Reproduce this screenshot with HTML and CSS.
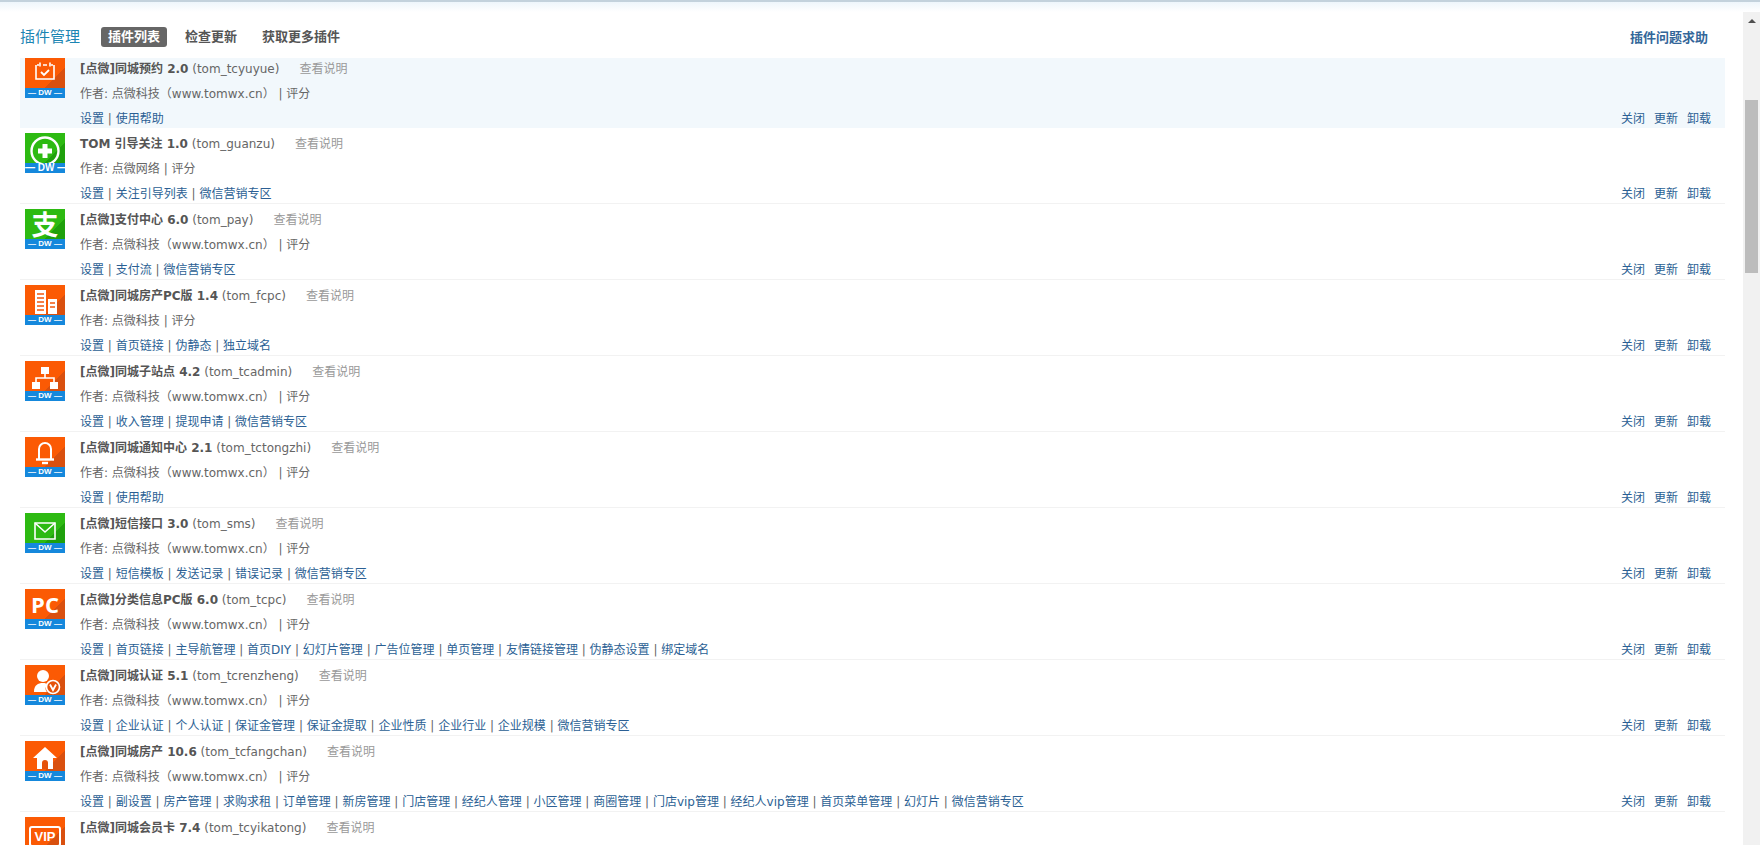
FILE: index.html
```html
<!doctype html>
<html>

	<head>
		<meta charset="utf-8">
		<title>插件管理</title>
		<link rel="stylesheet" href="styles.css">
	</head>

	<body>
		<div class="topline"></div>
		<div class="frame">
			<div class="main">
				<!-- 顶部导航 -->
				<div class="head">
					<h3 class="head-title">插件管理</h3>
					<a class="tab active">插件列表</a>
					<a class="tab">检查更新</a>
					<a class="tab">获取更多插件</a>
					<a class="help">插件问题求助</a>
				</div>

				<!-- 插件列表 -->
				<div class="list">
					<div class="row hover">
						<div class="icon orange">
							<svg viewBox="0 0 40 30"><path d="M12 7h2M18 7h4M26 7h2M11 7v14h18V7" fill="none" stroke="#fff" stroke-width="1.6"/><path d="M15 4.5v4M25 4.5v4" stroke="#fff" stroke-width="1.6"/><path d="M16 14l3 3 5-5" fill="none" stroke="#fff" stroke-width="1.8"/></svg>
							<div class="band">— DW —</div>
						</div>
						<div class="info">
							<p class="name"><b>[点微]同城预约 2.0</b> (tom_tcyuyue)<a class="desc">查看说明</a></p>
							<p class="author">作者: 点微科技（www.tomwx.cn） | 评分</p>
							<div class="links">
								<p><a>设置</a> | <a>使用帮助</a></p>
								<p class="ops"><a>关闭</a><a>更新</a><a>卸载</a></p>
							</div>
						</div>
					</div>

					<div class="row">
						<div class="icon green">
							<svg viewBox="0 0 40 30"><circle cx="20" cy="18" r="13.5" fill="none" stroke="#fff" stroke-width="2.4"/><path d="M20 11v14M13 18h14" stroke="#fff" stroke-width="5"/></svg>
							<div class="band big">— DW —</div>
						</div>
						<div class="info">
							<p class="name"><b>TOM 引导关注 1.0</b> (tom_guanzu)<a class="desc">查看说明</a></p>
							<p class="author">作者: 点微网络 | 评分</p>
							<div class="links">
								<p><a>设置</a> | <a>关注引导列表</a> | <a>微信营销专区</a></p>
								<p class="ops"><a>关闭</a><a>更新</a><a>卸载</a></p>
							</div>
						</div>
					</div>

					<div class="row">
						<div class="icon green">
							<div class="glyph zhi">支</div>
							<div class="band">— DW —</div>
						</div>
						<div class="info">
							<p class="name"><b>[点微]支付中心 6.0</b> (tom_pay)<a class="desc">查看说明</a></p>
							<p class="author">作者: 点微科技（www.tomwx.cn） | 评分</p>
							<div class="links">
								<p><a>设置</a> | <a>支付流</a> | <a>微信营销专区</a></p>
								<p class="ops"><a>关闭</a><a>更新</a><a>卸载</a></p>
							</div>
						</div>
					</div>

					<div class="row">
						<div class="icon orange">
							<svg viewBox="0 0 40 30"><path d="M10 5h11v24H10zM23 14h9v15h-9z" fill="#fff"/><path d="M12 9h7M12 13h7M12 17h7M12 21h7M12 25h7M25 18h5M25 22h5" stroke="#f2570c" stroke-width="1.6"/></svg>
							<div class="band">— DW —</div>
						</div>
						<div class="info">
							<p class="name"><b>[点微]同城房产PC版 1.4</b> (tom_fcpc)<a class="desc">查看说明</a></p>
							<p class="author">作者: 点微科技 | 评分</p>
							<div class="links">
								<p><a>设置</a> | <a>首页链接</a> | <a>伪静态</a> | <a>独立域名</a></p>
								<p class="ops"><a>关闭</a><a>更新</a><a>卸载</a></p>
							</div>
						</div>
					</div>

					<div class="row">
						<div class="icon orange">
							<svg viewBox="0 0 40 30"><path d="M16 6h8v7h-8zM7 21h8v7H7zM25 21h8v7h-8z" fill="#fff"/><path d="M20 13v4M11 21v-4h18v4" fill="none" stroke="#fff" stroke-width="1.6"/></svg>
							<div class="band">— DW —</div>
						</div>
						<div class="info">
							<p class="name"><b>[点微]同城子站点 4.2</b> (tom_tcadmin)<a class="desc">查看说明</a></p>
							<p class="author">作者: 点微科技（www.tomwx.cn） | 评分</p>
							<div class="links">
								<p><a>设置</a> | <a>收入管理</a> | <a>提现申请</a> | <a>微信营销专区</a></p>
								<p class="ops"><a>关闭</a><a>更新</a><a>卸载</a></p>
							</div>
						</div>
					</div>

					<div class="row">
						<div class="icon orange">
							<svg viewBox="0 0 40 30"><path d="M14 22V12a6 6 0 0 1 12 0v10" fill="none" stroke="#fff" stroke-width="2"/><path d="M11 22.500h18" stroke="#fff" stroke-width="2.400"/><path d="M17 26h6" stroke="#fff" stroke-width="2.400"/></svg>
							<div class="band">— DW —</div>
						</div>
						<div class="info">
							<p class="name"><b>[点微]同城通知中心 2.1</b> (tom_tctongzhi)<a class="desc">查看说明</a></p>
							<p class="author">作者: 点微科技（www.tomwx.cn） | 评分</p>
							<div class="links">
								<p><a>设置</a> | <a>使用帮助</a></p>
								<p class="ops"><a>关闭</a><a>更新</a><a>卸载</a></p>
							</div>
						</div>
					</div>

					<div class="row">
						<div class="icon green">
							<svg viewBox="0 0 40 30"><path d="M10 10h20v16H10z" fill="none" stroke="#fff" stroke-width="1.600"/><path d="M10 10l10 9 10-9" fill="none" stroke="#fff" stroke-width="1.600"/></svg>
							<div class="band">— DW —</div>
						</div>
						<div class="info">
							<p class="name"><b>[点微]短信接口 3.0</b> (tom_sms)<a class="desc">查看说明</a></p>
							<p class="author">作者: 点微科技（www.tomwx.cn） | 评分</p>
							<div class="links">
								<p><a>设置</a> | <a>短信模板</a> | <a>发送记录</a> | <a>错误记录</a> | <a>微信营销专区</a></p>
								<p class="ops"><a>关闭</a><a>更新</a><a>卸载</a></p>
							</div>
						</div>
					</div>

					<div class="row">
						<div class="icon orange">
							<div class="glyph pc">PC</div>
							<div class="band">— DW —</div>
						</div>
						<div class="info">
							<p class="name"><b>[点微]分类信息PC版 6.0</b> (tom_tcpc)<a class="desc">查看说明</a></p>
							<p class="author">作者: 点微科技（www.tomwx.cn） | 评分</p>
							<div class="links">
								<p><a>设置</a> | <a>首页链接</a> | <a>主导航管理</a> | <a>首页DIY</a> | <a>幻灯片管理</a> | <a>广告位管理</a> | <a>单页管理</a> | <a>友情链接管理</a> | <a>伪静态设置</a> | <a>绑定域名</a></p>
								<p class="ops"><a>关闭</a><a>更新</a><a>卸载</a></p>
							</div>
						</div>
					</div>

					<div class="row">
						<div class="icon orange">
							<svg viewBox="0 0 40 30"><circle cx="18" cy="11" r="6" fill="#fff"/><path d="M9 27c0-7 4-9 9-9 2 0 4 .500 5 1.500-3 2-3 5.500-1 7.500z" fill="#fff"/><circle cx="28" cy="22" r="6.500" fill="#e5520a" stroke="#fff" stroke-width="1.600"/><path d="M25 19.500l3 5.500 3-5.500" fill="none" stroke="#fff" stroke-width="1.800"/></svg>
							<div class="band">— DW —</div>
						</div>
						<div class="info">
							<p class="name"><b>[点微]同城认证 5.1</b> (tom_tcrenzheng)<a class="desc">查看说明</a></p>
							<p class="author">作者: 点微科技（www.tomwx.cn） | 评分</p>
							<div class="links">
								<p><a>设置</a> | <a>企业认证</a> | <a>个人认证</a> | <a>保证金管理</a> | <a>保证金提取</a> | <a>企业性质</a> | <a>企业行业</a> | <a>企业规模</a> | <a>微信营销专区</a></p>
								<p class="ops"><a>关闭</a><a>更新</a><a>卸载</a></p>
							</div>
						</div>
					</div>

					<div class="row">
						<div class="icon orange">
							<svg viewBox="0 0 40 30"><path d="M20 6L8 17h4v11h16V17h4z" fill="#fff"/><path d="M17 28v-6a3 3 0 0 1 6 0v6z" fill="#e5520a"/></svg>
							<div class="band">— DW —</div>
						</div>
						<div class="info">
							<p class="name"><b>[点微]同城房产 10.6</b> (tom_tcfangchan)<a class="desc">查看说明</a></p>
							<p class="author">作者: 点微科技（www.tomwx.cn） | 评分</p>
							<div class="links">
								<p><a>设置</a> | <a>副设置</a> | <a>房产管理</a> | <a>求购求租</a> | <a>订单管理</a> | <a>新房管理</a> | <a>门店管理</a> | <a>经纪人管理</a> | <a>小区管理</a> | <a>商圈管理</a> | <a>门店vip管理</a> | <a>经纪人vip管理</a> | <a>首页菜单管理</a> | <a>幻灯片</a> | <a>微信营销专区</a></p>
								<p class="ops"><a>关闭</a><a>更新</a><a>卸载</a></p>
							</div>
						</div>
					</div>

					<div class="row">
						<div class="icon orange">
							<div class="glyph vip">VIP</div>
							<div class="band">— DW —</div>
						</div>
						<div class="info">
							<p class="name"><b>[点微]同城会员卡 7.4</b> (tom_tcyikatong)<a class="desc">查看说明</a></p>
							<p class="author">作者: 点微科技（www.tomwx.cn） | 评分</p>
						</div>
					</div>
				</div>
			</div>

			<!-- 滚动条 -->
			<div class="scrollbar">
				<div class="arrow"></div>
				<div class="thumb"></div>
			</div>
		</div>
	</body>

</html>
```

FILE: styles.css
```css
* {
	box-sizing: border-box;
}

html,
body {
	height: 845px;
	margin: 0;
	overflow: hidden;
	background: #fff;
}

body {
	font: 12px/25px "DejaVu Sans", "Noto Sans CJK SC", sans-serif;
	color: #666;
}

p {
	margin: 0;
}

.topline {
	height: 12px;
	border-top: 2px solid #c3d2dc;
	background: linear-gradient(#eef6fb, #fff);
}

.frame {
	display: flex;
	height: 833px;
}

.main {
	flex: 1;
	min-width: 0;
	padding: 0 18px 0 20px;
}

.head {
	display: flex;
	align-items: center;
	height: 46px;
	padding-top: 4px;
}

.head-title {
	margin: 0 21px 0 0;
	font-size: 15px;
	font-weight: normal;
	color: #1b85b3;
}

.tab {
	margin-right: 11px;
	padding: 0 7px;
	height: 20px;
	line-height: 20px;
	border-radius: 3px;
	font-size: 13px;
	font-weight: bold;
	color: #555;
}

.tab.active {
	background: #666;
	color: #fff;
}

.help {
	margin-left: auto;
	padding-right: 17px;
	font-size: 13px;
	font-weight: bold;
	color: #336699;
}

.row {
	display: flex;
	height: 76px;
	padding-top: 5px;
	border-bottom: 1px solid #f2f2f2;
}

.row:first-child {
	height: 70px;
	padding-top: 0;
	background: #f2f8fc;
	border-bottom: 0;
}

.icon {
	flex: none;
	display: flex;
	flex-direction: column;
	width: 40px;
	height: 40px;
	margin: 0 15px 0 5px;
	overflow: hidden;
	color: #fff;
}

.icon svg {
	display: block;
	width: 40px;
	height: 30px;
}

.orange {
	background: linear-gradient(135deg, #fb5a04 62%, #d9500f 62%);
}

.green {
	background: linear-gradient(135deg, #2dba12 62%, #1fa00c 62%);
}

.band {
	height: 10px;
	background: #1588dc;
	font: bold 8px/10px "Liberation Sans", sans-serif;
	text-align: center;
	white-space: nowrap;
}

.band.big {
	font-size: 10px;
}

.glyph {
	height: 30px;
	text-align: center;
	font-weight: bold;
}

.zhi {
	font: bold 27px/30px "Noto Sans CJK SC", sans-serif;
}

.pc {
	font: bold 22px/31px "Open Sans", sans-serif;
}

.vip {
	margin: 9px 4px 0;
	height: 21px;
	border: 2px solid #fff;
	border-radius: 3px;
	font: bold 13px/18px "Liberation Sans", sans-serif;
}

.info {
	flex: 1;
	min-width: 0;
	margin-top: -1px;
}

.name b {
	color: #555;
}

.desc {
	margin-left: 20px;
	color: #999;
}

.links {
	display: flex;
	justify-content: space-between;
	padding-right: 14px;
}

.links a {
	color: #2b5f94;
}

.ops a {
	margin-left: 9px;
}

.scrollbar {
	flex: none;
	width: 17px;
	margin-left: 0;
	background: #f1f1f1;
	padding: 7px 2px 0;
}

.arrow {
	width: 0;
	margin: 0 auto;
	border: 4px solid transparent;
	border-top: 0;
	border-bottom: 4px solid #505050;
}

.thumb {
	height: 173px;
	margin-top: 77px;
	background: #bcbcbc;
}
```
